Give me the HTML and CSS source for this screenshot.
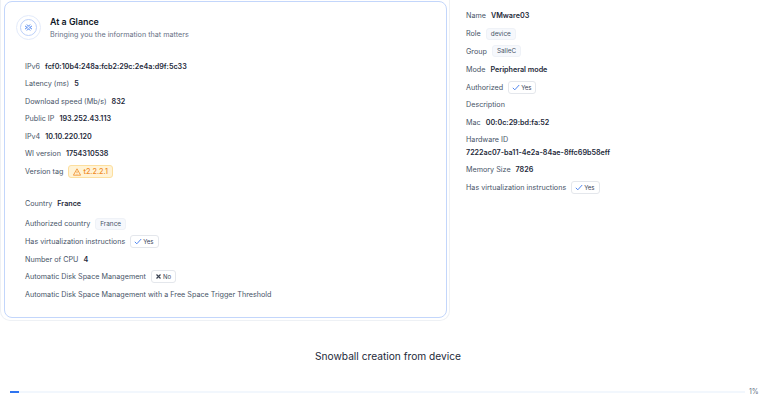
FILE: index.html
```html
<!DOCTYPE html>
<html lang="en">
<head>
<meta charset="utf-8">
<title>At a Glance</title>
<link rel="stylesheet" href="styles.css">
</head>
<body>
<div class="columns">
  <div class="card-outer">
    <section class="card">
      <header class="card-head">
        <span class="ring"><span class="ring-inner">
          <svg width="9" height="9" viewBox="0 0 10 10" fill="none" stroke="#4f86f0" stroke-width="1.100" stroke-linecap="round"><path d="M5 3.500 3.500 2M5 3.500 6.500 2M5 6.500 3.500 8M5 6.500 6.500 8M3.500 5 1.500 3.500M3.500 5 1.500 6.500M6.500 5 8.500 3.500M6.500 5 8.500 6.500"/></svg>
        </span></span>
        <div>
          <h2 class="title">At a Glance</h2>
          <p class="subtitle">Bringing you the information that matters</p>
        </div>
      </header>
      <div class="rows">
        <div class="row"><span class="lbl">IPv6</span><b>fcf0:10b4:248a:fcb2:29c:2e4a:d9f:5c33</b></div>
        <div class="row"><span class="lbl">Latency (ms)</span><b>5</b></div>
        <div class="row"><span class="lbl">Download speed (Mb/s)</span><b>832</b></div>
        <div class="row"><span class="lbl">Public IP</span><b>193.252.43.113</b></div>
        <div class="row"><span class="lbl">IPv4</span><b>10.10.220.120</b></div>
        <div class="row"><span class="lbl">WI version</span><b>1754310538</b></div>
        <div class="row row-tag"><span class="lbl">Version tag</span>
          <span class="warn"><svg width="8" height="8" viewBox="0 0 10 10" fill="none" stroke="#f08a24" stroke-width="1" stroke-linejoin="round"><path d="M5 1 9.500 9H.5ZM5 4v2.500M5 7.500v.5"/></svg>t2.2.2.1</span>
        </div>
        <div class="row row-gap"><span class="lbl">Country</span><b>France</b></div>
        <div class="row row-tall"><span class="lbl">Authorized country</span><span class="tag">France</span></div>
        <div class="row"><span class="lbl">Has virtualization instructions</span>
          <span class="pill"><svg class="ico" width="8" height="7" viewBox="0 0 8 7" fill="none" stroke="#4f86f0"><path d="M.8 3.800 2.800 5.800 7.200 1"/></svg>Yes</span></div>
        <div class="row"><span class="lbl">Number of CPU</span><b>4</b></div>
        <div class="row"><span class="lbl">Automatic Disk Space Management</span>
          <span class="pill"><svg class="ico" width="7" height="7" viewBox="0 0 7 7" fill="none" stroke="#3a4252" stroke-width="1.200"><path d="M1.500 1.500l4 4M5.500 1.500l-4 4"/></svg>No</span></div>
        <div class="row"><span class="lbl">Automatic Disk Space Management with a Free Space Trigger Threshold</span></div>
      </div>
    </section>
  </div>
  <aside class="side">
    <div class="row"><span class="lbl">Name</span><b>VMware03</b></div>
    <div class="row"><span class="lbl">Role</span><span class="tag">device</span></div>
    <div class="row"><span class="lbl">Group</span><span class="tag">SalleC</span></div>
    <div class="row"><span class="lbl">Mode</span><b>Peripheral mode</b></div>
    <div class="row"><span class="lbl">Authorized</span>
      <span class="pill"><svg class="ico" width="8" height="7" viewBox="0 0 8 7" fill="none" stroke="#4f86f0"><path d="M.8 3.800 2.800 5.800 7.200 1"/></svg>Yes</span></div>
    <div class="row"><span class="lbl">Description</span></div>
    <div class="row"><span class="lbl">Mac</span><b>00:0c:29:bd:fa:52</b></div>
    <div class="stack"><span class="lbl">Hardware ID</span><b>7222ac07-ba11-4e2a-84ae-8ffc69b58eff</b></div>
    <div class="row"><span class="lbl">Memory Size</span><b>7826</b></div>
    <div class="row"><span class="lbl">Has virtualization instructions</span>
      <span class="pill"><svg class="ico" width="8" height="7" viewBox="0 0 8 7" fill="none" stroke="#4f86f0"><path d="M.8 3.800 2.800 5.800 7.200 1"/></svg>Yes</span></div>
  </aside>
</div>
<h3 class="heading">Snowball creation from device</h3>
<div class="progress">
  <div class="track"><div class="fill" style="width:1%"></div></div>
  <span class="pct">1%</span>
</div>
</body>
</html>
```
FILE: styles.css
```css
* { box-sizing: border-box; }
html, body { margin: 0; padding: 0; }
body {
  width: 770px;
  height: 414px;
  overflow: hidden;
  background: #fff;
  font-family: Inter, "Liberation Sans", sans-serif;
  font-size: 7.2px;
  color: #475467;
}
.columns { display: flex; height: 321px; }
.card-outer {
  width: 450px;
  height: 321px;
  padding: 1px 2px 2px 3px;
  border: 1px solid #eef1f5;
  border-top: 0;
  border-radius: 0 0 10px 10px;
}
.card {
  height: 100%;
  border: 1px solid #c3d6fb;
  border-radius: 8px;
  padding: 13px 0 0 20px;
}
.card-head { display: flex; gap: 9px; align-items: flex-start; margin-left: -9px; }
.ring {
  width: 25px;
  height: 25px;
  border: 1px solid #e3ebfb;
  border-radius: 50%;
  display: flex;
  align-items: center;
  justify-content: center;
  flex: none;
}
.ring-inner {
  width: 17px;
  height: 17px;
  border: 1px solid #bcd0f9;
  border-radius: 50%;
  display: flex;
  align-items: center;
  justify-content: center;
}
.title { margin: 0; font-size: 8.900px; line-height: 13px; font-weight: 600; color: #101828; }
.subtitle { margin: 0; font-size: 7.200px; line-height: 11px; padding-top: 1px; color: #667085; }
.rows { margin-top: 17.500px; }
.row {
  display: flex;
  align-items: center;
  gap: 5px;
  height: 17.500px;
}
.row b, .stack b { font-weight: 600; color: #1d2939; }
.row-gap { margin-top: 14px; }
.row-tall { margin: 3px 0 0.500px; }
.row-tag { height: 18px; }
.warn {
  display: inline-flex;
  align-items: center;
  gap: 2px;
  height: 13px;
  padding: 0 4px;
  background: #fff3d6;
  border: 1px solid #fddf9e;
  border-radius: 3px;
  color: #f08a24;
  font-weight: 500;
}
.tag {
  display: inline-flex;
  align-items: center;
  height: 12px;
  padding: 0 4px;
  background: #f6f8fc;
  border: 1px solid #eff2f7;
  border-radius: 3px;
  font-size: 6.400px;
  color: #475467;
}
.pill {
  display: inline-flex;
  align-items: center;
  gap: 1px;
  height: 13px;
  padding: 0 4px 0 3px;
  background: #fff;
  border: 1px solid #e4e7ec;
  border-radius: 3px;
  font-size: 6px;
  color: #344054;
}
.ico { flex: none; }
.side { flex: 1; padding: 7px 0 0 16px; }
.side .row { height: 17.800px; }
.stack {
  display: flex;
  flex-direction: column;
  gap: 4px;
  padding: 3px 0 4px;
}
.heading {
  margin: 28px 0 0;
  padding-left: 6px;
  text-align: center;
  font-size: 10.200px;
  line-height: 14px;
  font-weight: 400;
  color: #1d2939;
}
.progress { display: flex; align-items: center; gap: 4px; margin: 24px 0 0 10px; }
.track { width: 735px; height: 2px; background: #f2f7fd; }
.fill { height: 100%; min-width: 9px; background: #2f74f0; }
.pct { font-size: 7px; color: #667085; }
```
